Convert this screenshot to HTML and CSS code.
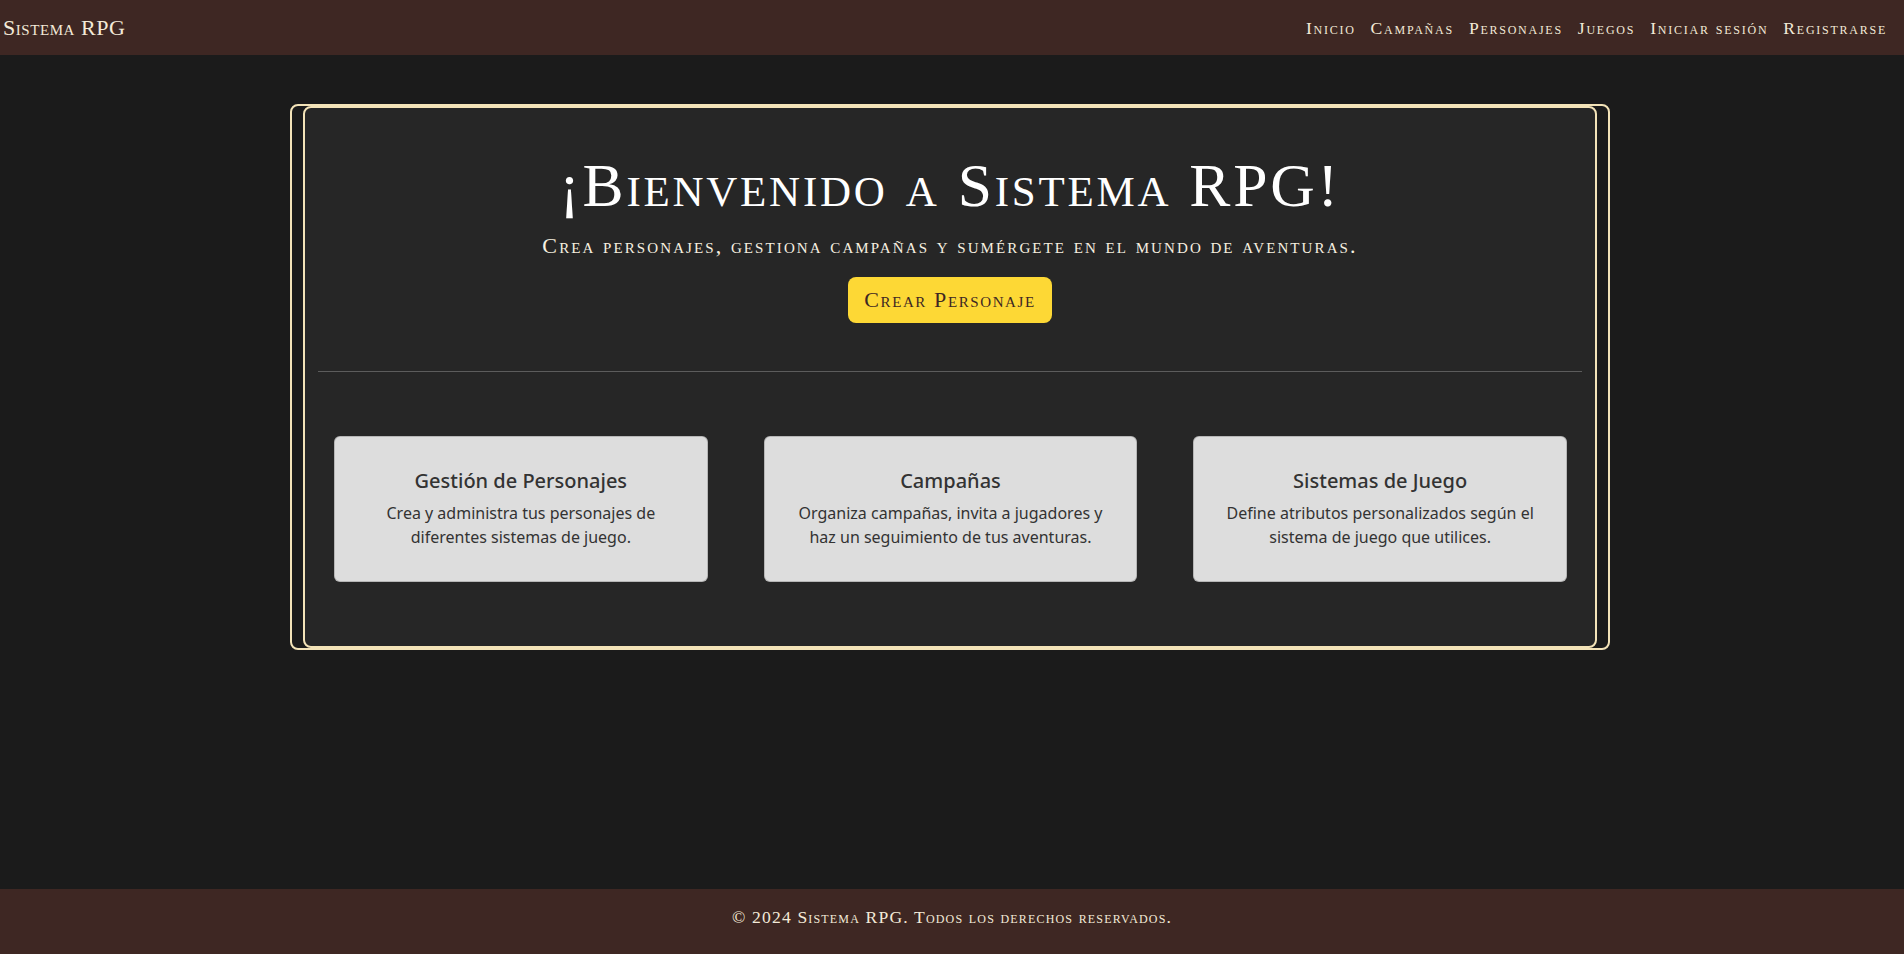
FILE: index.html
```html
<!DOCTYPE html>
<html lang="es">
<head>
<meta charset="utf-8">
<title>Sistema RPG</title>
<link rel="stylesheet" href="styles.css">
</head>
<body>
<header class="site-header">
  <a class="brand" href="#">Sistema RPG</a>
  <nav class="nav">
    <a class="nav-link" href="#">Inicio</a>
    <a class="nav-link" href="#">Campañas</a>
    <a class="nav-link" href="#">Personajes</a>
    <a class="nav-link" href="#">Juegos</a>
    <a class="nav-link" href="#">Iniciar sesión</a>
    <a class="nav-link" href="#">Registrarse</a>
  </nav>
</header>
<main class="main">
  <div class="frame">
    <div class="panel">
      <section class="hero">
        <h1 class="hero-title">¡Bienvenido a Sistema RPG!</h1>
        <p class="hero-lead">Crea personajes, gestiona campañas y sumérgete en el mundo de aventuras.</p>
        <a class="btn-create" href="#">Crear Personaje</a>
      </section>
      <hr class="divider">
      <section class="features">
        <div class="feature-card">
          <h5 class="feature-title">Gestión de Personajes</h5>
          <p class="feature-text">Crea y administra tus personajes de diferentes sistemas de juego.</p>
        </div>
        <div class="feature-card">
          <h5 class="feature-title">Campañas</h5>
          <p class="feature-text">Organiza campañas, invita a jugadores y haz un seguimiento de tus aventuras.</p>
        </div>
        <div class="feature-card">
          <h5 class="feature-title">Sistemas de Juego</h5>
          <p class="feature-text">Define atributos personalizados según el sistema de juego que utilices.</p>
        </div>
      </section>
    </div>
  </div>
</main>
<footer class="site-footer">
  <p class="footer-text">© 2024 Sistema RPG. Todos los derechos reservados.</p>
</footer>
</body>
</html>
```
FILE: styles.css
```css
* { box-sizing: border-box; }
html, body { margin: 0; padding: 0; }
body {
  background: #1b1b1b;
  color: #f5f5f5;
  font-family: "Liberation Serif", "Times New Roman", serif;
  font-variant: small-caps;
  min-height: 100vh;
  display: flex;
  flex-direction: column;
}
a { text-decoration: none; }

.site-header {
  height: 55px;
  background: #3e2723;
  display: flex;
  align-items: center;
  justify-content: space-between;
  padding: 0 10px 0 3px;
}
.brand {
  color: #f3ead8;
  font-size: 22px;
  line-height: 30px;
  letter-spacing: 0.55px;
}
.nav { display: flex; }
.nav-link {
  color: #f3ead8;
  font-size: 17.6px;
  line-height: 24px;
  letter-spacing: 1.75px;
  padding: 0 7px 0 8px;
}

.main { flex: 1; }
.frame {
  width: 1320px;
  margin: 49px auto 0 calc(50% - 662px);
  padding: 0 11px;
  border: 2px solid #f3e3b8;
  border-radius: 8px;
}
.panel {
  background: #262626;
  border: 2px solid #f3e3b8;
  border-radius: 8px;
}
.hero {
  text-align: center;
  padding: 44px 0 48px;
}
.hero-title {
  margin: 0 0 12px;
  font-size: 61.6px;
  font-weight: 400;
  line-height: 67px;
  letter-spacing: 2.75px;
  color: #ffffff;
}
.hero-lead {
  margin: 0 0 16px;
  font-size: 22px;
  line-height: 30px;
  letter-spacing: 2.1px;
  color: #f7f0e0;
}
.btn-create {
  display: inline-block;
  background: #fdd835;
  color: #3e2723;
  font-size: 22px;
  line-height: 30px;
  letter-spacing: 1.6px;
  padding: 8px 16px;
  border-radius: 8px;
}
.divider {
  margin: 0 13px;
  border: 0;
  border-top: 1px solid #5c5c5c;
}
.features {
  display: grid;
  grid-template-columns: repeat(3, 1fr);
  gap: 56px;
  padding: 64px 28px 64px 29px;
}
.feature-card {
  background: #dddddd;
  border: 1px solid rgba(0, 0, 0, 0.175);
  border-radius: 6px;
  padding: 32px;
  text-align: center;
  color: #333333;
  font-family: "Noto Sans", "Open Sans", sans-serif;
  font-variant: normal;
}
.feature-title {
  margin: 0 0 8px;
  font-size: 20px;
  font-weight: 500;
  line-height: 1.2;
}
.feature-text {
  margin: 0;
  font-size: 16px;
  line-height: 24px;
}

.site-footer {
  height: 65px;
  background: #3e2723;
  text-align: center;
  padding-top: 16px;
}
.footer-text {
  margin: 0;
  font-size: 17.6px;
  line-height: 24px;
  letter-spacing: 1.16px;
  color: #f3ead8;
}
```
